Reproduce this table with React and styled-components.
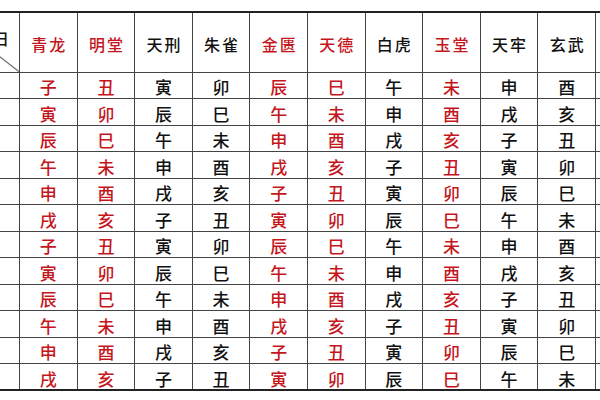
import React from 'react';
import styled, {createGlobalStyle} from 'styled-components';


const GlobalStyle = createGlobalStyle`
    html, body {
        margin: 0;
        padding: 0;
        background: #fff;
        overflow: hidden;
    }
    body {
        font-family: "Noto Sans CJK SC", "Noto Sans", sans-serif;
    }
`;

const RED = '#c4161c';

const Page = styled.div`
    width: 600px;
    height: 400px;
    overflow: hidden;
    padding-top: 11px;
    box-sizing: border-box;
`;

const Table = styled.table`
    border-collapse: collapse;
    table-layout: fixed;
    margin-left: -58px;
    border-top: 2px solid #222;
    border-bottom: 2px solid #222;
`;

const HeadCell = styled.th`
    width: ${p => p.$w || 57.6}px;
    min-width: ${p => p.$w || 57.6}px;
    height: 60px;
    padding: 0;
    padding-top: 4px;
    box-sizing: border-box;
    border: 1px solid #444;
    border-top: none;
    font-size: 16px;
    font-weight: 500;
    letter-spacing: 2px;
    text-indent: 2px;
    color: ${p => (p.$red ? RED : '#111')};
    text-align: center;
    vertical-align: middle;
`;

const CornerCell = styled(HeadCell)`
    position: relative;
    background: linear-gradient(to bottom left,
        transparent calc(50% - 0.8px),
        #222 50%,
        transparent calc(50% + 0.8px));
`;

const CornerLabel = styled.span`
    position: absolute;
    left: 48px;
    top: 13px;
    font-size: 16px;
    color: #111;
`;

const Cell = styled.td`
    height: 26.5px;
    padding: 0;
    padding-top: 3px;
    box-sizing: border-box;
    border: 1px solid #444;
    font-size: 17px;
    font-weight: 500;
    color: ${p => (p.$red ? RED : '#111')};
    text-align: center;
    vertical-align: middle;
    line-height: 1;
`;

const gods = [
    {name: '青龙', red: true},
    {name: '明堂', red: true},
    {name: '天刑', red: false},
    {name: '朱雀', red: false},
    {name: '金匮', red: true},
    {name: '天德', red: true},
    {name: '白虎', red: false},
    {name: '玉堂', red: true},
    {name: '天牢', red: false},
    {name: '玄武', red: false},
];

const branches = ['子', '丑', '寅', '卯', '辰', '巳', '午', '未', '申', '酉', '戌', '亥'];

// each row starts two branches after the one before, the cycle repeats after six rows
const rows = Array.from({length: 12}, (_, r) =>
    gods.map((_, c) => branches[((r % 6) * 2 + c) % 12])
);


export default function App() {
    return (
        <Page>
            <GlobalStyle/>
            <Table>
                <thead>
                    <tr>
                        <CornerCell $w={77}>
                            <CornerLabel>日</CornerLabel>
                        </CornerCell>
                        {gods.map(g => (
                            <HeadCell key={g.name} $red={g.red}>{g.name}</HeadCell>
                        ))}
                        <HeadCell/>
                    </tr>
                </thead>
                <tbody>
                    {rows.map((row, r) => (
                        <tr key={r}>
                            <Cell/>
                            {row.map((b, c) => (
                                <Cell key={c} $red={gods[c].red}>{b}</Cell>
                            ))}
                            <Cell/>
                        </tr>
                    ))}
                </tbody>
            </Table>
        </Page>
    );
}
